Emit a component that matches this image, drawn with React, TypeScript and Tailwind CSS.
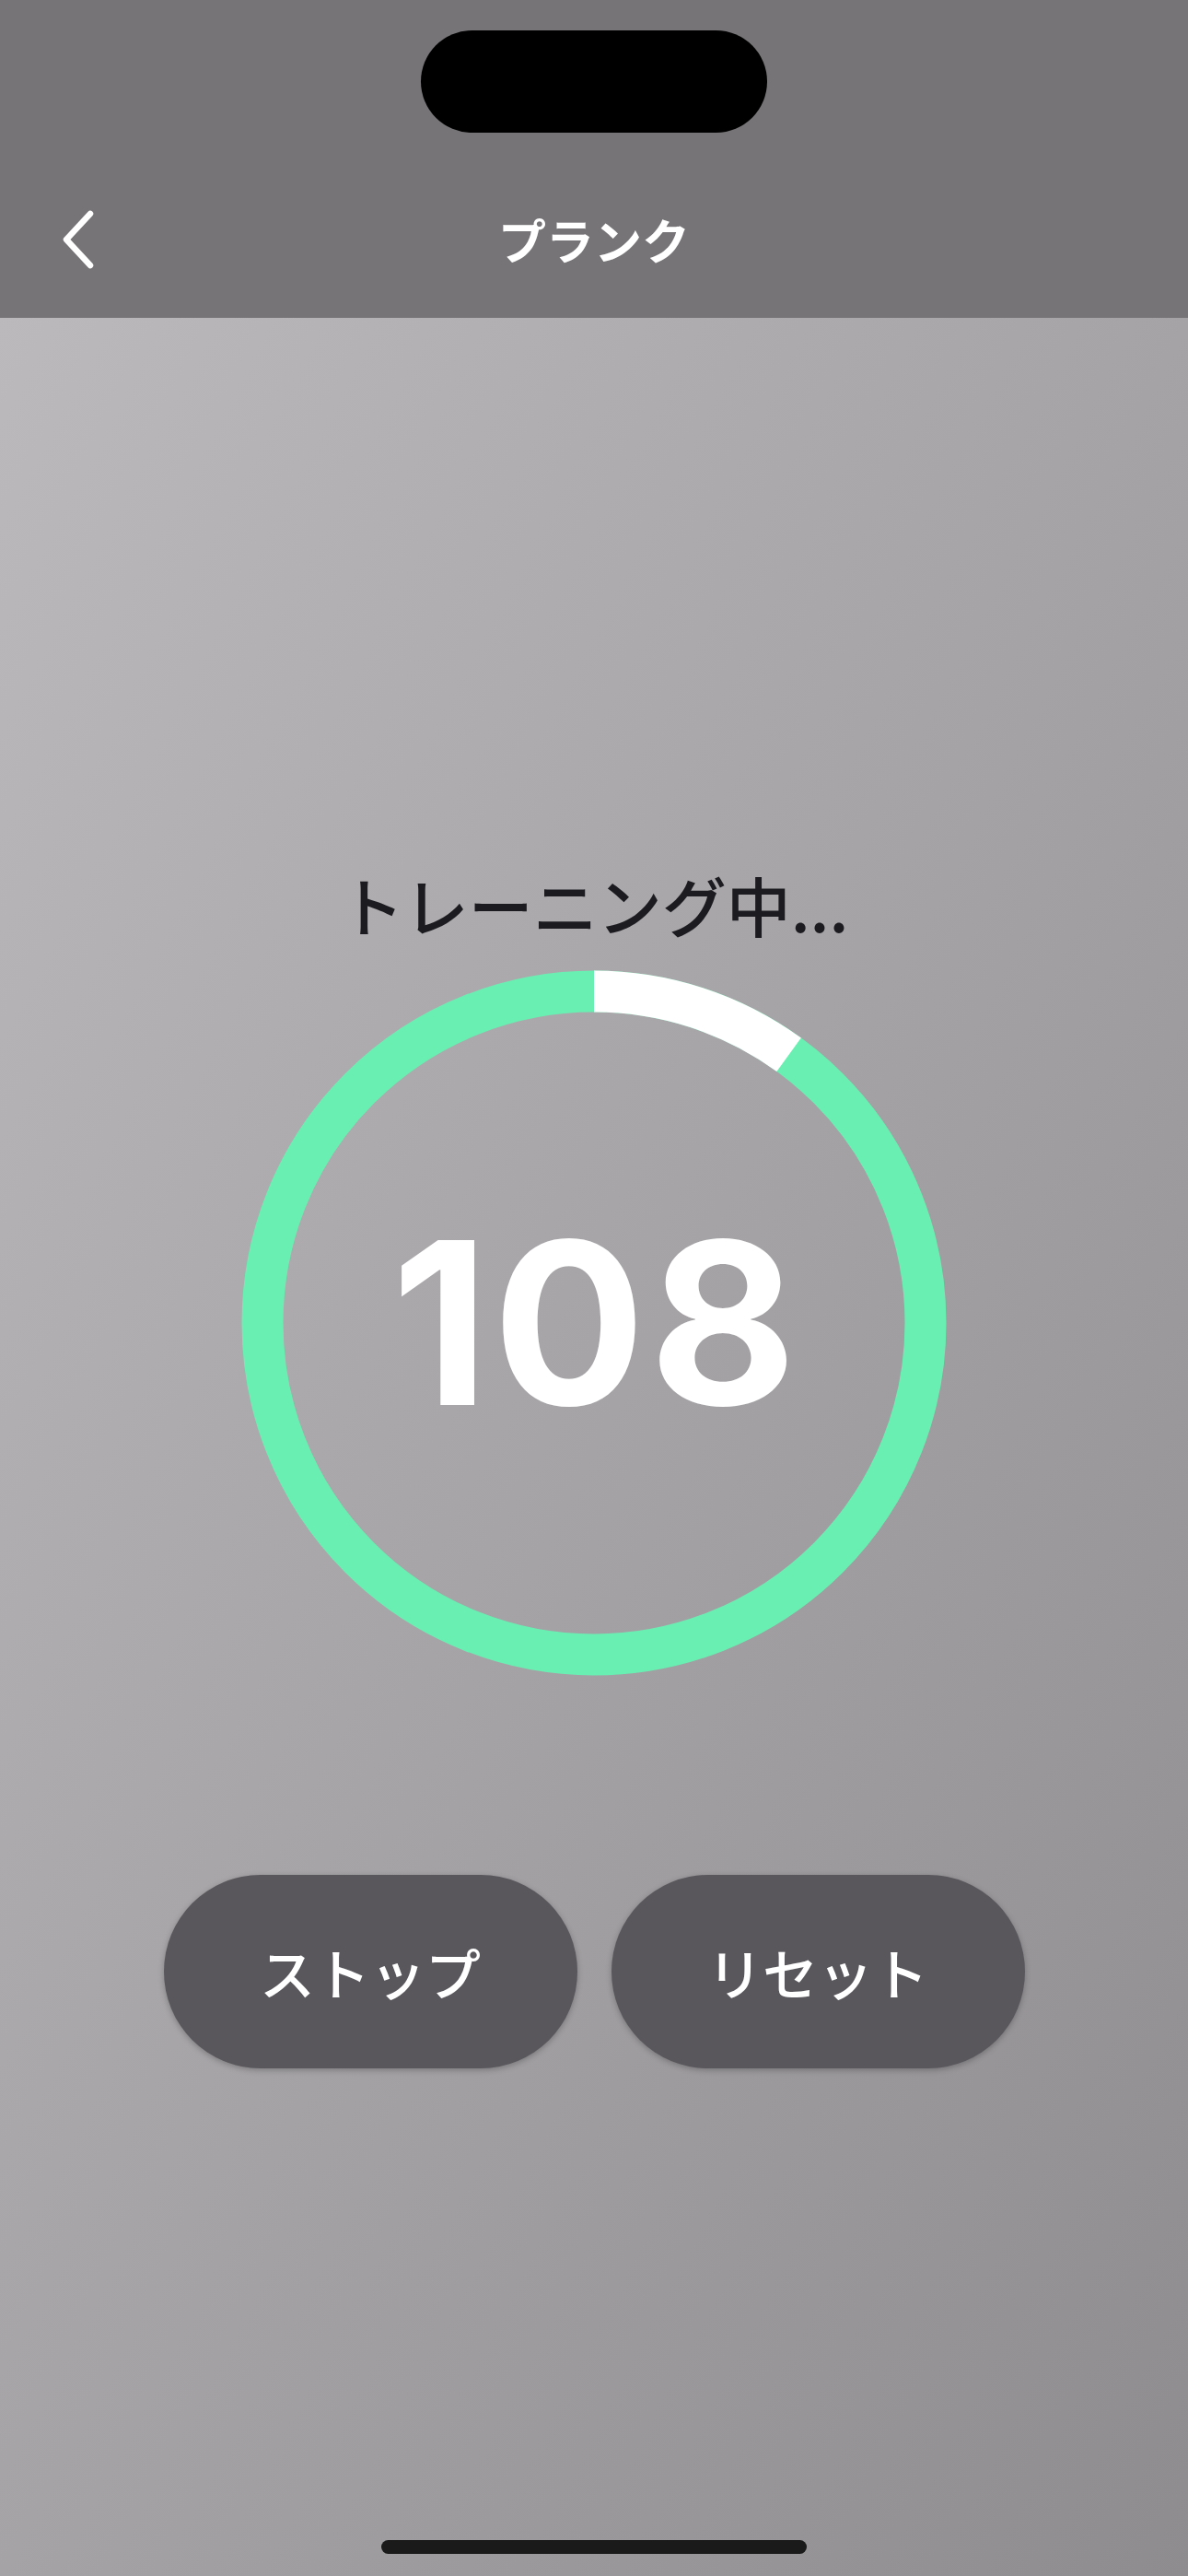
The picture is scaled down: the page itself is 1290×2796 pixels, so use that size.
import React from "react";

const RING_R = 360;
const RING_C = 2 * Math.PI * RING_R;
const progress = 0.1; // white part from 12 o'clock

function BackChevron() {
  return (
    <svg width="44" height="64" viewBox="0 0 44 64" fill="none">
      <path
        d="M36 4 L10 32 L36 60"
        stroke="white"
        strokeWidth="6.5"
        strokeLinecap="round"
        strokeLinejoin="round"
      />
    </svg>
  );
}

function Ring() {
  return (
    <div className="relative w-[766px] h-[766px]">
      <svg width="766" height="766" viewBox="0 0 766 766" className="block">
        <circle cx="383" cy="383" r={RING_R} fill="none" stroke="#6aefb2" strokeWidth="45" />
        <circle
          cx="383"
          cy="383"
          r={RING_R}
          fill="none"
          stroke="#ffffff"
          strokeWidth="45"
          strokeDasharray={`${RING_C * progress} ${RING_C}`}
          transform="rotate(-90 383 383)"
        />
      </svg>
      <div className="absolute inset-0 flex items-center justify-center">
        <span className="text-white font-bold text-[246px] leading-none font-['Inter','Liberation_Sans',sans-serif] tracking-[4px] pl-[4px]">
          108
        </span>
      </div>
    </div>
  );
}

function PillButton({ label }: { label: string }) {
  return (
    <button className="w-[449px] h-[210px] rounded-full bg-[#59575c] shadow-[0_2px_6px_rgba(0,0,0,0.25)] flex items-center justify-center text-white text-[60px] font-medium font-['Noto_Sans_CJK_JP',sans-serif]">
      {label}
    </button>
  );
}

export default function App() {
  return (
    <div className="w-[1290px] h-[2796px] flex flex-col overflow-hidden font-['Noto_Sans_CJK_JP',sans-serif]">
      {/* Top bar */}
      <div className="relative h-[345px] bg-[#767477] shrink-0">
        <div className="absolute left-[457px] top-[33px] w-[376px] h-[111px] rounded-full bg-black" />
        <div className="absolute left-0 right-0 top-[220px] h-[80px] flex items-center justify-center">
          <div className="absolute left-[62px] top-[8px]">
            <BackChevron />
          </div>
          <span className="text-white text-[52px] font-semibold leading-none">プランク</span>
        </div>
      </div>

      {/* Main */}
      <div className="flex-1 flex flex-col items-center bg-linear-to-br from-[#bbb9bb] via-[#a5a3a6] to-[#8e8c8f] pt-[602px] pb-[24px]">
        <h1 className="text-[#1c1b1f] text-[70px] leading-[70px] font-medium">トレーニング中...</h1>
        <div className="mt-[36px]">
          <Ring />
        </div>
        <div className="mt-[216px] flex gap-[37px]">
          <PillButton label="ストップ" />
          <PillButton label="リセット" />
        </div>
        <div className="mt-auto w-[462px] h-[15px] rounded-full bg-[#1a1a1a]" />
      </div>
    </div>
  );
}
